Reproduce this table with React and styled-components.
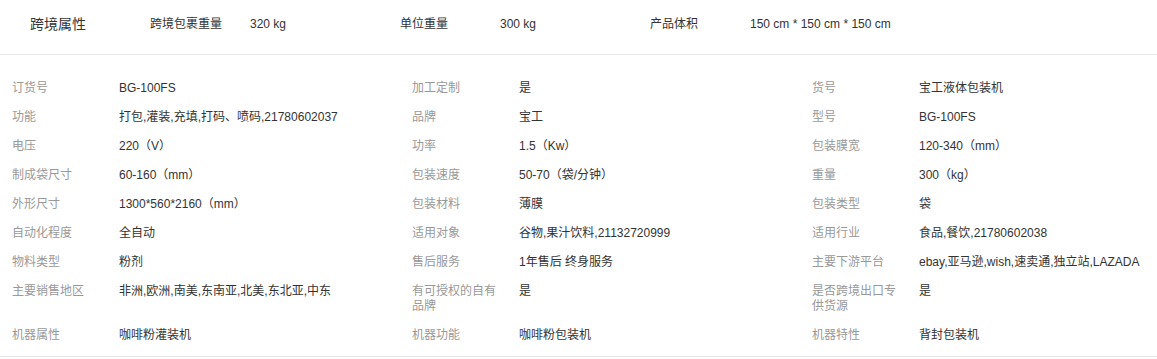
import React from 'react'
import styled, { createGlobalStyle } from 'styled-components'

const GlobalStyle = createGlobalStyle`
    body {
        margin: 0;
        background: #fff;
        font-family: "Liberation Sans", Arial, "Noto Sans CJK SC", sans-serif;
        color: #333;
    }
`

const Panel = styled.div`
    width: 1157px;
    background: #fff;
`

const Header = styled.div`
    height: 55px;
    display: flex;
    align-items: flex-start;
    padding-top: 15px;
    box-sizing: border-box;
    border-bottom: 1px solid #e6e6e6;
    line-height: 18px;
`

const Title = styled.div`
    width: 120px;
    padding-left: 30px;
    font-size: 14px;
    color: #333;
`

const HeaderItem = styled.div`
    display: flex;
    width: 250px;
    font-size: 12px;
    color: #333;
`

const HeaderLabel = styled.span`
    width: 100px;
`

const Body = styled.div`
    display: grid;
    grid-template-columns: 400px 400px 1fr;
    padding: 19px 0 6px;
    border-bottom: 1px solid #e6e6e6;
`

const Cell = styled.div`
    display: flex;
    align-items: flex-start;
    padding: 7px 0;
    font-size: 12px;
    line-height: 15px;
`

const Label = styled.div`
    width: 91px;
    padding-left: 12px;
    margin-right: 16px;
    flex-shrink: 0;
    color: #999;
`

const Value = styled.div`
    color: #333;
    white-space: nowrap;
`

const header = [
    ['跨境包裹重量', '320 kg'],
    ['单位重量', '300 kg'],
    ['产品体积', '150 cm * 150 cm * 150 cm'],
]

const rows = [
    [['订货号', 'BG-100FS'], ['加工定制', '是'], ['货号', '宝工液体包装机']],
    [['功能', '打包,灌装,充填,打码、喷码,21780602037'], ['品牌', '宝工'], ['型号', 'BG-100FS']],
    [['电压', '220（V）'], ['功率', '1.5（Kw）'], ['包装膜宽', '120-340（mm）']],
    [['制成袋尺寸', '60-160（mm）'], ['包装速度', '50-70（袋/分钟）'], ['重量', '300（kg）']],
    [['外形尺寸', '1300*560*2160（mm）'], ['包装材料', '薄膜'], ['包装类型', '袋']],
    [['自动化程度', '全自动'], ['适用对象', '谷物,果汁饮料,21132720999'], ['适用行业', '食品,餐饮,21780602038']],
    [['物料类型', '粉剂'], ['售后服务', '1年售后 终身服务'], ['主要下游平台', 'ebay,亚马逊,wish,速卖通,独立站,LAZADA']],
    [['主要销售地区', '非洲,欧洲,南美,东南亚,北美,东北亚,中东'], ['有可授权的自有品牌', '是'], ['是否跨境出口专供货源', '是']],
    [['机器属性', '咖啡粉灌装机'], ['机器功能', '咖啡粉包装机'], ['机器特性', '背封包装机']],
]

export default function App() {
    return (
        <Panel>
            <GlobalStyle />
            <Header>
                <Title>跨境属性</Title>
                {header.map(([k, v]) => (
                    <HeaderItem key={k}>
                        <HeaderLabel>{k}</HeaderLabel>
                        <span>{v}</span>
                    </HeaderItem>
                ))}
            </Header>
            <Body>
                {rows.flat().map(([k, v]) => (
                    <Cell key={k}>
                        <Label>{k}</Label>
                        <Value>{v}</Value>
                    </Cell>
                ))}
            </Body>
        </Panel>
    )
}
